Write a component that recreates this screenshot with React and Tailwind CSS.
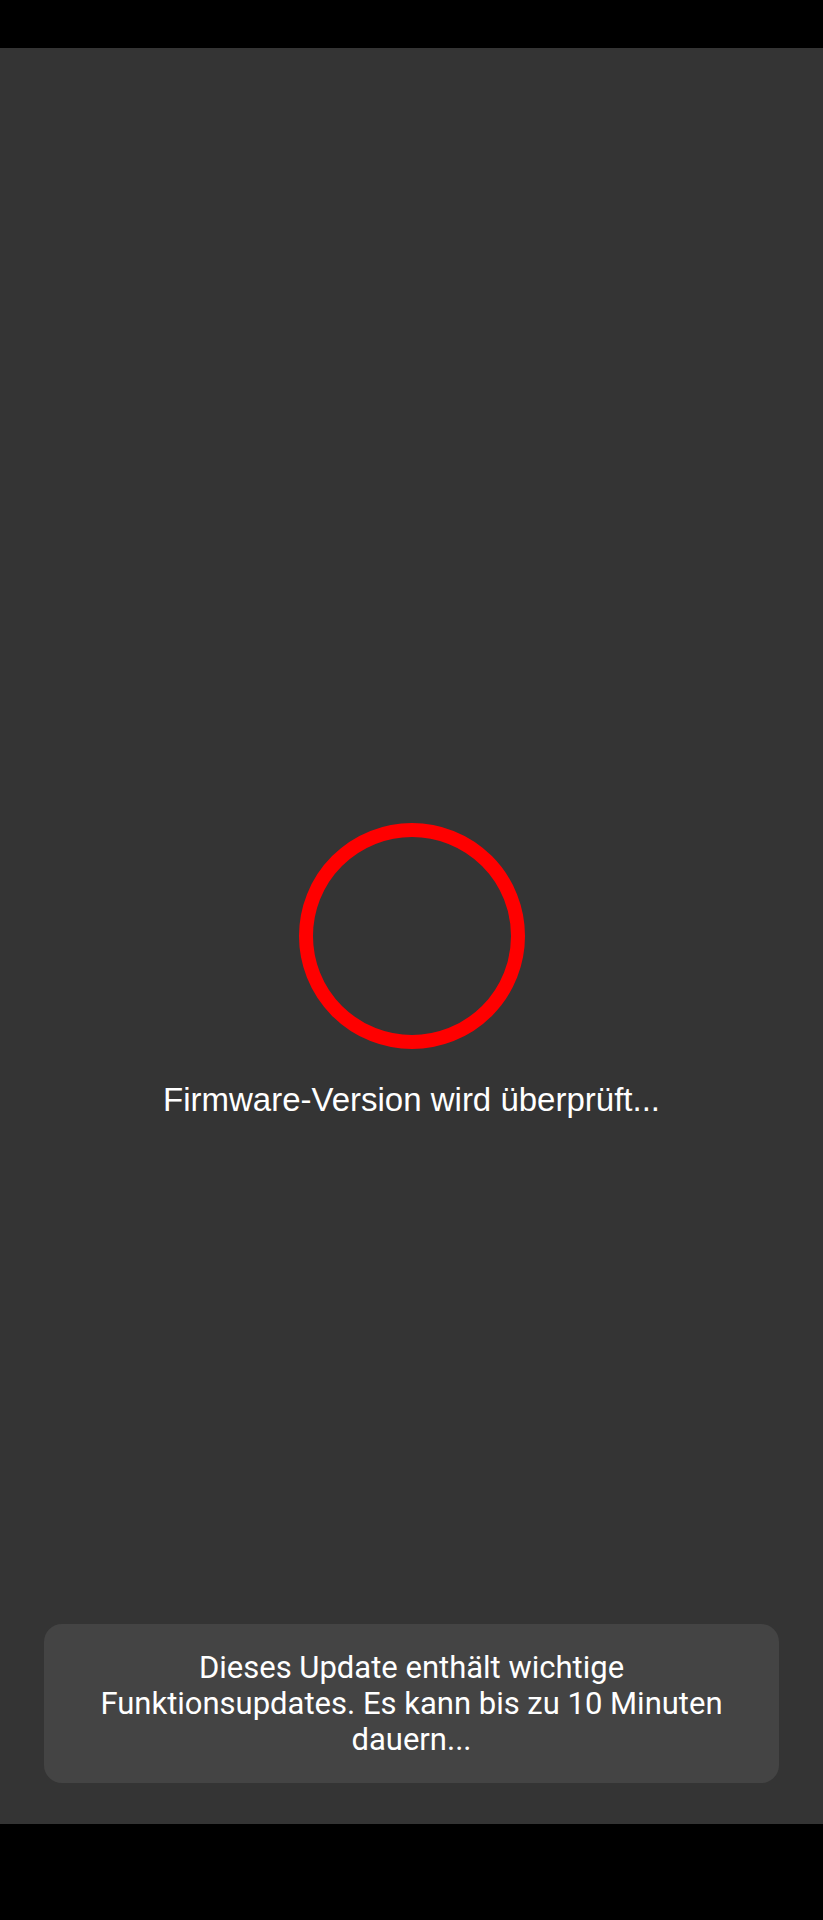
export default function App() {
  return (
    <div className="flex h-[1920px] w-full flex-col bg-black">
      <div className="h-[48px] w-full bg-black" />
      <div className="flex flex-1 flex-col bg-[#343434]">
        <div className="flex-1" />
        <div className="flex justify-center">
          <svg width="226" height="226" viewBox="0 0 226 226">
            <circle cx="113" cy="113" r="106" fill="none" stroke="#ff0000" strokeWidth="14" />
          </svg>
        </div>
        <div className="flex flex-1 flex-col">
          <p className="mt-[32px] text-center text-[33px] leading-[38px] text-white" style={{ fontFamily: '"Liberation Sans", Arial, sans-serif' }}>
            Firmware-Version wird überprüft...
          </p>
          <div className="flex-1" />
          <div className="mx-[44px] mb-[41px] rounded-[18px] bg-[#444444] px-[42px] pt-[26px] pb-[25px]">
            <p className="text-center text-[31px] leading-[36px] text-white" style={{ fontFamily: 'Roboto, "Noto Sans", sans-serif' }}>
              Dieses Update enthält wichtige Funktionsupdates. Es kann bis zu 10 Minuten dauern...
            </p>
          </div>
        </div>
      </div>
      <div className="h-[96px] w-full bg-black" />
    </div>
  );
}
